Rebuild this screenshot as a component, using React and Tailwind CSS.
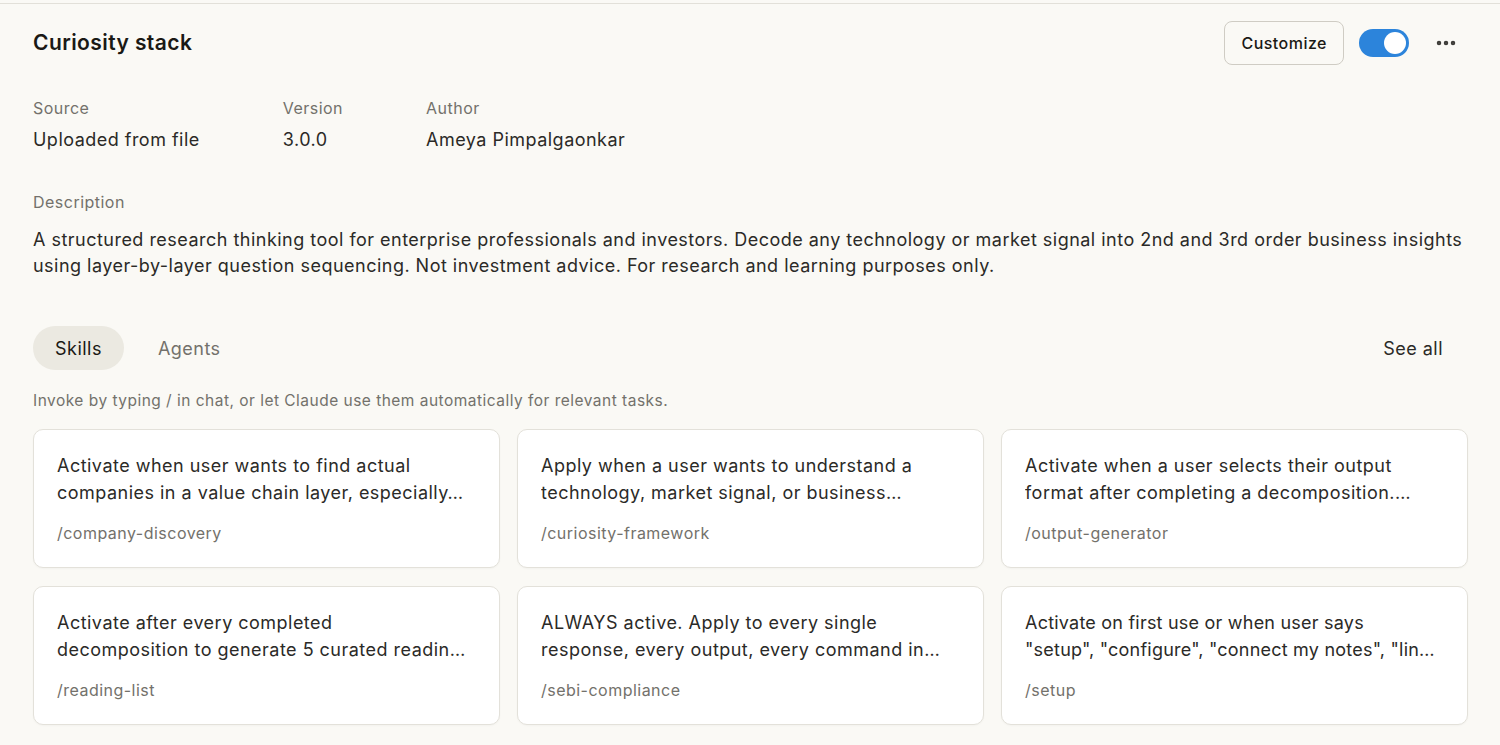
import { MoreHorizontal } from 'lucide-react'

const skills = [
  {
    lines: ['Activate when user wants to find actual', 'companies in a value chain layer, especially…'],
    slug: '/company-discovery',
  },
  {
    lines: ['Apply when a user wants to understand a', 'technology, market signal, or business…'],
    slug: '/curiosity-framework',
  },
  {
    lines: ['Activate when a user selects their output', 'format after completing a decomposition.…'],
    slug: '/output-generator',
  },
  {
    lines: ['Activate after every completed', 'decomposition to generate 5 curated readin…'],
    slug: '/reading-list',
  },
  {
    lines: ['ALWAYS active. Apply to every single', 'response, every output, every command in…'],
    slug: '/sebi-compliance',
  },
  {
    lines: ['Activate on first use or when user says', '"setup", "configure", "connect my notes", "lin…'],
    slug: '/setup',
    tight: true,
  },
]

function Meta({ label, value }) {
  return (
    <div className="flex flex-col">
      <span className="text-[16px] leading-[24px] text-[#73716b]">{label}</span>
      <span className="mt-[7px] text-[18px] leading-[26px] text-[#2b2a27]">{value}</span>
    </div>
  )
}

function SkillCard({ lines, slug, tight }) {
  return (
    <div className="rounded-[10px] border border-[#e3e1da] bg-white px-[23px] pt-[22px] pb-[22px] shadow-[0_1px_2px_rgba(0,0,0,0.03)]">
      <div
        className={`text-[18px] leading-[27px] text-[#2b2a27] ${tight ? 'tracking-[0.012em]' : ''}`}
      >
        {lines.map((l, i) => (
          <div key={i} className="overflow-hidden whitespace-nowrap">
            {l}
          </div>
        ))}
      </div>
      <p className="mt-[15px] text-[16px] leading-[24px] text-[#73716b]">{slug}</p>
    </div>
  )
}

export default function App() {
  return (
    <div
      className="min-h-[745px] bg-[#faf9f5] pt-[3px] tracking-[0.03em]"
      style={{ fontFamily: 'Inter, "Noto Sans", sans-serif' }}
    >
      <div className="border-t border-[#e2e0d9] px-[33px] pr-[32px]">
        {/* header */}
        <div className="flex h-[76px] items-center justify-between pt-[1px]">
          <h1 className="text-[21px] font-semibold tracking-[0.02em] text-[#1a1915]">Curiosity stack</h1>
          <div className="flex items-center">
            <button className="h-[44px] rounded-[8px] border border-[#cfccc4] bg-[#faf9f5] px-[16px] text-[16px] font-medium text-[#1a1915]">
              Customize
            </button>
            <div className="ml-[15px] flex h-[28px] w-[50px] items-center justify-end rounded-full bg-[#2c84db] px-[3px]">
              <div className="h-[22px] w-[22px] rounded-full bg-white" />
            </div>
            <button className="ml-[25px] mr-[10px] text-[#3d3c38]">
              <MoreHorizontal size={24} strokeWidth={2.5} />
            </button>
          </div>
        </div>

        {/* metadata */}
        <div className="mt-[16px] flex gap-[83px]">
          <Meta label="Source" value="Uploaded from file" />
          <Meta label="Version" value="3.0.0" />
          <Meta label="Author" value="Ameya Pimpalgaonkar" />
        </div>

        {/* description */}
        <div className="mt-[37px]">
          <span className="text-[16px] leading-[24px] text-[#73716b]">Description</span>
          <p className="mt-[13px] text-[18px] leading-[26px] text-[#2b2a27]">
            A structured research thinking tool for enterprise professionals and investors. Decode any technology or
            market signal into 2nd and 3rd order business insights using layer-by-layer question sequencing. Not
            investment advice. For research and learning purposes only.
          </p>
        </div>

        {/* tabs */}
        <div className="mt-[47px] flex items-center justify-between">
          <div className="flex items-center gap-[12px]">
            <button className="h-[44px] rounded-full bg-[#ebe9e1] px-[22px] text-[18px] text-[#1a1915]">Skills</button>
            <button className="h-[44px] rounded-full px-[22px] text-[18px] text-[#73716b]">Agents</button>
          </div>
          <button className="mr-[25px] text-[18px] text-[#2b2a27]">See all</button>
        </div>

        <p className="mt-[19px] text-[15.5px] leading-[24px] text-[#73716b]">
          Invoke by typing / in chat, or let Claude use them automatically for relevant tasks.
        </p>

        {/* skills grid */}
        <div className="mt-[16px] grid grid-cols-3 gap-x-[17px] gap-y-[18px]">
          {skills.map((s) => (
            <SkillCard key={s.slug} lines={s.lines} slug={s.slug} tight={s.tight} />
          ))}
        </div>
      </div>
    </div>
  )
}
